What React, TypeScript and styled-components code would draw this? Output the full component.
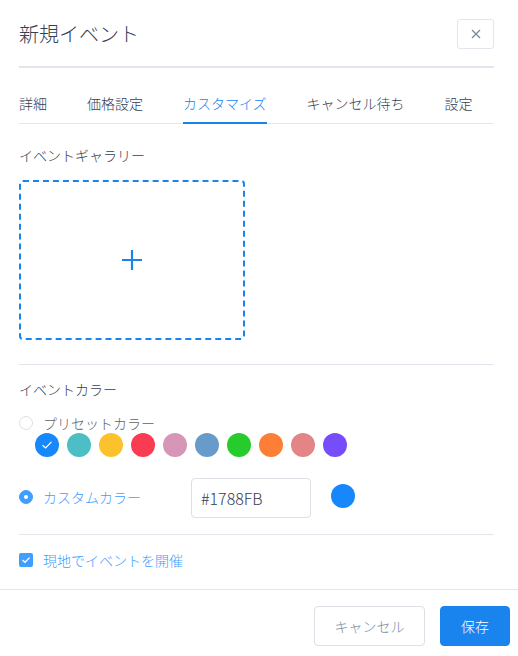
import React from "react";
import styled, { createGlobalStyle } from "styled-components";

const Global = createGlobalStyle`
  html, body { margin: 0; padding: 0; background: #fff; }
  body { font-family: "Noto Sans CJK JP", "Noto Sans", "Liberation Sans", sans-serif; font-weight: 300; color: #354052; }
  * { box-sizing: border-box; }
`;

const Dialog = styled.div`
  width: 518px;
  height: 656px;
  display: flex;
  flex-direction: column;
  background: #fff;
`;

const Body = styled.div`
  padding: 19px 24px 0 19px;
  flex: 1;
`;

const Header = styled.div`
  display: flex;
  align-items: center;
  justify-content: space-between;
  height: 30px;
`;

const Title = styled.h1`
  margin: 0;
  font-size: 20px;
  font-weight: 300;
  line-height: 30px;
  color: #354052;
`;

const CloseBtn = styled.button`
  width: 37px;
  height: 30px;
  border: 1px solid #e2e6ec;
  border-radius: 3px;
  background: #fff;
  display: flex;
  align-items: center;
  justify-content: center;
  padding: 0;
`;

const HeaderRule = styled.div`
  margin-top: 17px;
  height: 2px;
  background: #e2e6ec;
`;

const Tabs = styled.div`
  margin-top: 15px;
  display: flex;
  gap: 40px;
  border-bottom: 1px solid #e4e7ed;
`;

const Tab = styled.div<{ $active?: boolean }>`
  height: 40px;
  line-height: 40px;
  font-size: 14px;
  color: ${(p) => (p.$active ? "#1a84ee" : "#354052")};
  position: relative;
  white-space: nowrap;
  &::after {
    content: "";
    position: absolute;
    left: 0;
    right: 0;
    bottom: -1px;
    height: 2px;
    background: ${(p) => (p.$active ? "#1a84ee" : "transparent")};
  }
`;

const SectionLabel = styled.div<{ $top: number }>`
  margin-top: ${(p) => p.$top}px;
  font-size: 14px;
  line-height: 20px;
  color: #354052;
`;

const Upload = styled.div`
  margin-top: 15px;
  width: 226px;
  height: 160px;
  border: 2px dashed #1a84ee;
  border-radius: 4px;
  display: flex;
  align-items: center;
  justify-content: center;
`;

const Rule = styled.div<{ $top: number }>`
  margin-top: ${(p) => p.$top}px;
  height: 1px;
  background: #e2e6ec;
`;

const RadioRow = styled.div`
  margin-top: 14px;
  display: flex;
  align-items: center;
  height: 20px;
  gap: 10px;
`;

const RadioCircle = styled.span<{ $checked?: boolean }>`
  width: 14px;
  height: 14px;
  border-radius: 50%;
  border: 1px solid ${(p) => (p.$checked ? "#409eff" : "#dcdfe6")};
  background: ${(p) => (p.$checked ? "#409eff" : "#fff")};
  display: flex;
  align-items: center;
  justify-content: center;
  flex-shrink: 0;
  &::after {
    content: "";
    width: 4px;
    height: 4px;
    border-radius: 50%;
    background: ${(p) => (p.$checked ? "#fff" : "transparent")};
  }
`;

const OptionText = styled.span<{ $active?: boolean }>`
  font-size: 14px;
  line-height: 20px;
  color: ${(p) => (p.$active ? "#409eff" : "#606266")};
`;

const Swatches = styled.div`
  display: flex;
  gap: 8px;
  margin-left: 16px;
`;

const Swatch = styled.span<{ $color: string }>`
  width: 24px;
  height: 24px;
  border-radius: 50%;
  background: ${(p) => p.$color};
  display: flex;
  align-items: center;
  justify-content: center;
`;

const CustomRow = styled.div`
  margin-top: 21px;
  display: flex;
  align-items: center;
  height: 40px;
`;

const CustomLabel = styled.div`
  width: 172px;
  display: flex;
  align-items: center;
  gap: 10px;
  margin-top: -3px;
`;

const HexInput = styled.div`
  width: 120px;
  height: 40px;
  border: 1px solid #dcdfe6;
  border-radius: 4px;
  padding-left: 9px;
  display: flex;
  align-items: center;
  font-family: "Noto Sans CJK JP", "Noto Sans", sans-serif;
  font-weight: 300;
  font-size: 16px;
  color: #354052;
`;

const Preview = styled.span`
  margin-left: 20px;
  margin-top: -4px;
  width: 24px;
  height: 24px;
  border-radius: 50%;
  background: #1788fb;
`;

const CheckRow = styled.div`
  margin-top: 15px;
  display: flex;
  align-items: center;
  height: 20px;
  gap: 10px;
`;

const CheckBox = styled.span`
  width: 14px;
  height: 14px;
  border-radius: 2px;
  background: #409eff;
  display: flex;
  align-items: center;
  justify-content: center;
`;

const Footer = styled.div`
  border-top: 1px solid #e2e6ec;
  padding: 16px 8px 10px 0;
  display: flex;
  justify-content: flex-end;
  gap: 15px;
`;

const Button = styled.button<{ $primary?: boolean }>`
  height: 40px;
  width: ${(p) => (p.$primary ? "70px" : "111px")};
  border-radius: 4px;
  border: 1px solid ${(p) => (p.$primary ? "#1a84ee" : "#dcdfe6")};
  background: ${(p) => (p.$primary ? "#1a84ee" : "#fff")};
  color: ${(p) => (p.$primary ? "#fff" : "#7f8ba4")};
  font-family: "Noto Sans CJK JP", sans-serif;
  font-weight: 300;
  font-size: 14px;
  padding: 0;
`;

const colors = [
  "#1788FB",
  "#4BBEC6",
  "#FBC22D",
  "#FA3C52",
  "#D696B8",
  "#689BCA",
  "#26CC2B",
  "#FD7E35",
  "#E38587",
  "#774DFB",
];

const tabs = ["詳細", "価格設定", "カスタマイズ", "キャンセル待ち", "設定"];

export default function App() {
  return (
    <>
      <Global />
      <Dialog>
        <Body>
          <Header>
            <Title>新規イベント</Title>
            <CloseBtn aria-label="close">
              <svg width="10" height="10" viewBox="0 0 10 10">
                <path d="M1 1L9 9M9 1L1 9" stroke="#7f8ba4" strokeWidth="1.4" />
              </svg>
            </CloseBtn>
          </Header>
          <HeaderRule />
          <Tabs>
            {tabs.map((t) => (
              <Tab key={t} $active={t === "カスタマイズ"}>
                {t}
              </Tab>
            ))}
          </Tabs>
          <SectionLabel $top={21}>イベントギャラリー</SectionLabel>
          <Upload>
            <svg width="22" height="22" viewBox="0 0 22 22">
              <path d="M11 1V21M1 11H21" stroke="#1a84ee" strokeWidth="2.2" />
            </svg>
          </Upload>
          <Rule $top={24} />
          <SectionLabel $top={14}>イベントカラー</SectionLabel>
          <RadioRow>
            <RadioCircle />
            <OptionText>プリセットカラー</OptionText>
          </RadioRow>
          <Swatches>
            {colors.map((c, i) => (
              <Swatch key={c} $color={c}>
                {i === 0 && (
                  <svg width="12" height="10" viewBox="0 0 12 10">
                    <path d="M1.5 5.2L4.6 8L10.5 1.8" stroke="#fff" strokeWidth="1.2" fill="none" />
                  </svg>
                )}
              </Swatch>
            ))}
          </Swatches>
          <CustomRow>
            <CustomLabel>
              <RadioCircle $checked />
              <OptionText $active>カスタムカラー</OptionText>
            </CustomLabel>
            <HexInput>#1788FB</HexInput>
            <Preview />
          </CustomRow>
          <Rule $top={16} />
          <CheckRow>
            <CheckBox>
              <svg width="10" height="8" viewBox="0 0 10 8">
                <path d="M1.5 4L4 6.3L8.6 1.6" stroke="#fff" strokeWidth="1.3" fill="none" />
              </svg>
            </CheckBox>
            <OptionText $active>現地でイベントを開催</OptionText>
          </CheckRow>
        </Body>
        <Footer>
          <Button>キャンセル</Button>
          <Button $primary>保存</Button>
        </Footer>
      </Dialog>
    </>
  );
}
